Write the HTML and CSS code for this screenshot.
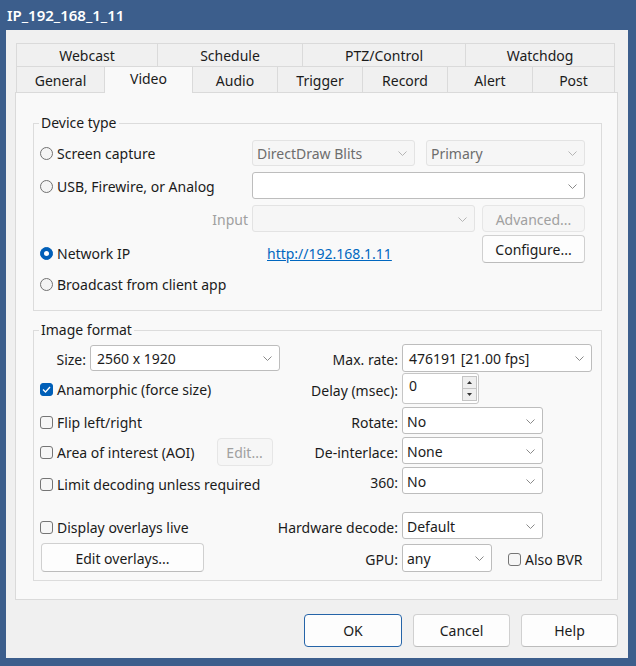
FILE: index.html
```html
<!DOCTYPE html>
<html>
<head>
<meta charset="utf-8">
<link rel="stylesheet" href="styles.css">
</head>
<body>
<div class="window">
  <div class="titlebar">IP_192_168_1_11</div>
  <div class="client">
    <div class="tabctl">
      <div class="tabrow row1">
        <div class="tab w141">Webcast</div>
        <div class="tab w145">Schedule</div>
        <div class="tab w163">PTZ/Control</div>
        <div class="tab w150">Watchdog</div>
      </div>
      <div class="tabrow row2">
        <div class="tab w88">General</div>
        <div class="tab w88 sel">Video</div>
        <div class="tab w85">Audio</div>
        <div class="tab w85">Trigger</div>
        <div class="tab w85">Record</div>
        <div class="tab w85">Alert</div>
        <div class="tab w83">Post</div>
      </div>
      <div class="page">
        <fieldset class="group device">
          <legend>Device type</legend>
          <div class="drow r1">
            <div class="col1"><span class="radio"></span><span>Screen capture</span></div>
            <div class="combo dis w163"><span>DirectDraw Blits</span><svg class="chev" width="9" height="5" viewBox="0 0 9 5"><polyline points="0.5,0.5 4.5,4.5 8.5,0.5"/></svg></div>
            <div class="combo dis w159 ml11"><span>Primary</span><svg class="chev" width="9" height="5" viewBox="0 0 9 5"><polyline points="0.5,0.5 4.5,4.5 8.5,0.5"/></svg></div>
          </div>
          <div class="drow r2">
            <div class="col1"><span class="radio"></span><span>USB, Firewire, or Analog</span></div>
            <div class="combo w333 blank"><span></span><svg class="chev" width="9" height="5" viewBox="0 0 9 5"><polyline points="0.5,0.5 4.5,4.5 8.5,0.5"/></svg></div>
          </div>
          <div class="drow r3">
            <div class="col1 right dimtext">Input</div>
            <div class="combo dis w223"><span></span><svg class="chev" width="9" height="5" viewBox="0 0 9 5"><polyline points="0.5,0.5 4.5,4.5 8.5,0.5"/></svg></div>
            <div class="btn disbtn w103 ml7">Advanced...</div>
          </div>
          <div class="drow r4">
            <div class="col1 lab"><span class="radio on"></span><span>Network IP</span></div>
            <div class="linkcell lab"><a class="link">http://192.168.1.11</a></div>
            <div class="btn w103">Configure...</div>
          </div>
          <div class="drow r5">
            <div class="col1"><span class="radio"></span><span>Broadcast from client app</span></div>
          </div>
        </fieldset>

        <fieldset class="group format">
          <legend>Image format</legend>
          <div class="frow fa">
            <div class="left">
              <span class="sizelab">Size:</span>
              <div class="combo edit w190"><span>2560 x 1920</span><svg class="chev" width="9" height="5" viewBox="0 0 9 5"><polyline points="0.5,0.5 4.5,4.5 8.5,0.5"/></svg></div>
            </div>
            <div class="rlab">Max. rate:</div>
            <div class="combo edit w190"><span>476191 [21.00 fps]</span><svg class="chev" width="9" height="5" viewBox="0 0 9 5"><polyline points="0.5,0.5 4.5,4.5 8.5,0.5"/></svg></div>
          </div>
          <div class="frow fb">
            <div class="left"><span class="check on"><svg width="9" height="7" viewBox="0 0 9 7"><polyline points="1,3.5 3.5,6 8,1"/></svg></span><span>Anamorphic (force size)</span></div>
            <div class="rlab">Delay (msec):</div>
            <div class="spin">
              <span class="spintext">0</span>
              <div class="arrows">
                <div class="arr"><svg width="5" height="3" viewBox="0 0 5 3"><polygon points="0,3 2.5,0 5,3"/></svg></div>
                <div class="arr"><svg width="5" height="3" viewBox="0 0 5 3"><polygon points="0,0 2.5,3 5,0"/></svg></div>
              </div>
            </div>
          </div>
          <div class="frow fc">
            <div class="left"><span class="check"></span><span>Flip left/right</span></div>
            <div class="rlab">Rotate:</div>
            <div class="combo w141"><span>No</span><svg class="chev" width="9" height="5" viewBox="0 0 9 5"><polyline points="0.5,0.5 4.5,4.5 8.5,0.5"/></svg></div>
          </div>
          <div class="frow fd">
            <div class="left"><span class="check"></span><span>Area of interest (AOI)</span><div class="btn disbtn aoiedit">Edit...</div></div>
            <div class="rlab">De-interlace:</div>
            <div class="combo w141"><span>None</span><svg class="chev" width="9" height="5" viewBox="0 0 9 5"><polyline points="0.5,0.5 4.5,4.5 8.5,0.5"/></svg></div>
          </div>
          <div class="frow fe">
            <div class="left"><span class="check"></span><span>Limit decoding unless required</span></div>
            <div class="rlab">360:</div>
            <div class="combo w141"><span>No</span><svg class="chev" width="9" height="5" viewBox="0 0 9 5"><polyline points="0.5,0.5 4.5,4.5 8.5,0.5"/></svg></div>
          </div>
          <div class="frow ff">
            <div class="left"><span class="check"></span><span>Display overlays live</span></div>
            <div class="rlab">Hardware decode:</div>
            <div class="combo w141"><span>Default</span><svg class="chev" width="9" height="5" viewBox="0 0 9 5"><polyline points="0.5,0.5 4.5,4.5 8.5,0.5"/></svg></div>
          </div>
          <div class="frow fg">
            <div class="left"><div class="btn editov">Edit overlays...</div></div>
            <div class="rlab">GPU:</div>
            <div class="combo w90"><span>any</span><svg class="chev" width="9" height="5" viewBox="0 0 9 5"><polyline points="0.5,0.5 4.5,4.5 8.5,0.5"/></svg></div>
            <div class="bvr"><span class="check"></span><span>Also BVR</span></div>
          </div>
        </fieldset>
      </div>
    </div>
    <div class="dlgbtns">
      <div class="btn big def">OK</div>
      <div class="btn big w97">Cancel</div>
      <div class="btn big w97">Help</div>
    </div>
  </div>
</div>
</body>
</html>
```
FILE: styles.css
```css
* { box-sizing: border-box; }
html, body { margin: 0; padding: 0; }
body {
  width: 636px;
  height: 666px;
  overflow: hidden;
  font-family: "Noto Sans", "Open Sans", sans-serif;
  font-size: 14px;
  color: #1b1b1b;
  background: #3c5e8c;
}
.window { width: 636px; height: 666px; display: flex; flex-direction: column; }
.titlebar {
  height: 30px;
  padding-left: 7px;
  color: #fff;
  font-weight: 600;
  font-size: 15px;
  line-height: 30px;
}
.client {
  margin: 0 8px 8px 6px;
  height: 628px;
  background: #f0f0f0;
  padding: 13px 10px 0 9px;
}
.tabctl { width: 603px; }
.tabrow { display: flex; margin-left: 1px; }
.row1 { height: 24px; }
.row2 { height: 25px; align-items: flex-end; }
.tab {
  flex-shrink: 0;
  border: 1px solid #dadada;
  border-right: none;
  background: #f0f0f0;
  text-align: center;
  line-height: 23px;
  height: 100%;
}
.tab:last-child { border-right: 1px solid #dadada; }
.row2 .tab { border-top: none; height: 25px; line-height: 27px; border-bottom: none; }
.row2 .tab.sel {
  background: #f9f9f9;
  height: 27px;
  margin-bottom: -1px;
  margin-top: -2px;
  border-top: 1px solid #dadada;
  position: relative;
  z-index: 1;
  line-height: 24px;
}
.row2 .tab.sel + .tab { border-left: 1px solid #dadada; }
.w141 { width: 141px; } .w145 { width: 145px; } .w163 { width: 163px; } .w150 { width: 150px; }
.w88 { width: 88px; } .w85 { width: 85px; } .w83 { width: 83px; }
.w159 { width: 159px; } .w333 { width: 333px; } .w223 { width: 223px; } .w103 { width: 103px; }
.w190 { width: 190px; } .w90 { width: 90px; } .w97 { width: 97px; }
.ml11 { margin-left: 11px; } .ml7 { margin-left: 7px; }

.page {
  height: 508px;
  border: 1px solid #dadada;
  background: #f9f9f9;
  padding: 21px 15px 0 17px;
}
.group {
  margin: 0;
  border: 1px solid #dcdcdc;
  padding: 0 0 0 6px;
  min-width: 0;
}
.group legend {
  padding: 0 2px;
  margin-left: -1px;
  line-height: 18px;
  height: 18px;
}
.device { height: 197px; padding-top: 8px; }
.format { height: 260px; margin-top: 10px; padding-top: 5px; }

.drow { display: flex; align-items: center; }
.r1 { height: 26px; }
.r2 { height: 27px; margin-top: 6px; }
.r3 { height: 27px; margin-top: 6px; }
.r4 { height: 28px; margin-top: 3px; align-items: flex-end; }
.r5 { height: 20px; margin-top: 11px; }
.col1 { width: 212px; flex-shrink: 0; display: flex; align-items: center; gap: 4px; white-space: nowrap; padding-top: 1px; }
.col1.right { justify-content: flex-end; padding-right: 4px; }
.dimtext { color: #a0a0a0; }
.lab { height: 20px; align-self: flex-end; }
.linkcell { width: 230px; flex-shrink: 0; padding-left: 15px; display: flex; align-items: center; }
.link { color: #0067c0; text-decoration: underline; }
.r4 .btn { align-self: stretch; }

.radio {
  width: 13px; height: 13px; flex-shrink: 0;
  border: 1px solid #717171;
  border-radius: 50%;
  background: #f4f4f4;
  display: inline-flex; align-items: center; justify-content: center;
}
.radio.on { background: #005fb8; border-color: #005fb8; }
.radio.on::after { content: ""; width: 5px; height: 5px; border-radius: 50%; background: #fff; }
.check {
  width: 13px; height: 13px; flex-shrink: 0;
  border: 1px solid #757575;
  border-radius: 3px;
  background: #f6f6f6;
  display: inline-flex; align-items: center; justify-content: center;
}
.check.on { background: #005fb8; border-color: #005fb8; }
.check svg polyline { fill: none; stroke: #fff; stroke-width: 1.3; }

.combo {
  flex-shrink: 0;
  height: 100%;
  border: 1px solid #bdbdbd;
  border-radius: 3px;
  background: #fff;
  display: flex; align-items: center; justify-content: space-between;
  padding: 1px 7px 0 4px;
  white-space: nowrap;
}
.combo.edit { padding-left: 6px; }
.combo.dis { background: #f6f6f6; border-color: #e3e3e3; color: #6d6d6d; }
.chev polyline { fill: none; stroke: #8a8a8a; stroke-width: 1; }
.combo.dis .chev polyline { stroke: #b5b5b5; }

.btn {
  flex-shrink: 0;
  height: 100%;
  border: 1px solid #d0d0d0;
  border-bottom-color: #bcbcbc;
  border-radius: 4px;
  background: #fdfdfd;
  display: flex; align-items: center; justify-content: center;
  white-space: nowrap;
  padding-top: 1px;
}
.btn.disbtn { background: #f6f6f6; border-color: #e6e6e6; color: #a0a0a0; }

.frow { display: flex; align-items: center; }
.frow .left { width: 240px; flex-shrink: 0; display: flex; align-items: center; gap: 4px; white-space: nowrap; height: 100%; }
.rlab { width: 118px; flex-shrink: 0; display: flex; justify-content: flex-end; white-space: nowrap; margin-right: 4px; padding-top: 3px; }
.fa { height: 28px; }
.fb { height: 31px; margin-top: 1px; }
.fc { height: 27px; margin-top: 3px; }
.fd { height: 27px; margin-top: 3px; }
.fe { height: 27px; margin-top: 3px; }
.ff { height: 27px; margin-top: 18px; }
.fg { height: 29px; margin-top: 4px; }
.fa .left { padding-top: 2px; }
.fa .left .combo { margin-top: -2px; }
.fb .left { padding-top: 1px; }
.fc .left { padding-top: 4px; }
.fd .left { padding-top: 4px; }
.fe .left { padding-top: 7px; }
.ff .left { padding-top: 3px; }
.sizelab { width: 46px; text-align: right; flex-shrink: 0; }
.aoiedit { width: 56px; height: 28px; margin-left: 18px; margin-top: -2px; }
.editov { width: 163px; height: 29px; margin-left: 1px; }
.fg .combo { height: 28px; }
.bvr { display: flex; align-items: center; gap: 4px; margin-left: 16px; white-space: nowrap; padding-top: 3px; }

.spin {
  width: 77px; height: 31px; flex-shrink: 0;
  border: 1px solid #c6c6c6;
  border-radius: 3px;
  background: #fff;
  display: flex;
  padding: 1px 1px 1px 6px;
}
.spintext { flex: 1; line-height: 22px; }
.arrows { width: 15px; display: flex; flex-direction: column; padding: 1px 0; }
.arr {
  flex: 1;
  border: 1px solid #c4c4c4;
  background: #efefef;
  display: flex; align-items: center; justify-content: center;
}
.arr + .arr { border-top: none; }
.arr polygon { fill: #333; }

.dlgbtns { display: flex; justify-content: flex-end; gap: 11px; margin-top: 14px; height: 33px; }
.btn.big { width: 97px; padding-top: 0; }
.btn.def { width: 98px; border: 1px solid #2564a8; }
```
